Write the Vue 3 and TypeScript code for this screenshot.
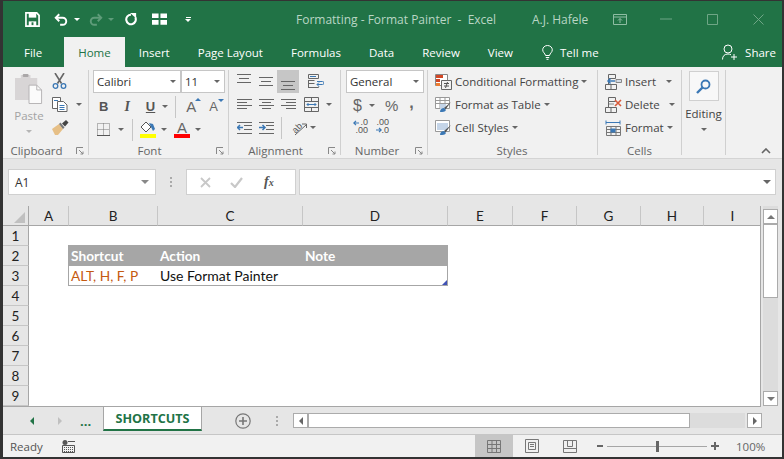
<script setup lang="ts">
const columns = [
  { name: 'A', width: 40 },
  { name: 'B', width: 89 },
  { name: 'C', width: 145 },
  { name: 'D', width: 145 },
  { name: 'E', width: 65 },
  { name: 'F', width: 64 },
  { name: 'G', width: 64 },
  { name: 'H', width: 63 },
  { name: 'I', width: 58 }
]
const rows = [1, 2, 3, 4, 5, 6, 7, 8, 9]

const cells: Record<string, string> = {
  B2: 'Shortcut',
  C2: 'Action',
  D2: 'Note',
  B3: 'ALT, H, F, P',
  C3: 'Use Format Painter'
}

const gridColumns = `26px ${columns.map((c) => c.width + 'px').join(' ')}`

const cellClass = (col: string, row: number) => {
  const inTable = col === 'B' || col === 'C' || col === 'D'
  return {
    'tbl-head': inTable && row === 2,
    'tbl-row': inTable && row === 3,
    'tbl-first': col === 'B' && row === 3,
    'tbl-first-head': col === 'B' && row === 2,
    'tbl-last': col === 'D' && row === 3,
    shortcut: col === 'B' && row === 3
  }
}
</script>

<template>
  <div class="window">
    <header class="titlebar">
      <div class="qat">
        <svg class="q-save" width="15" height="15" viewBox="0 0 16 16"><path d="M1 1h11.500l2.500 2.500V15H1z" fill="none" stroke="#fff" stroke-width="1.800"/><rect x="4" y="1" width="8" height="5" fill="#fff"/><rect x="4" y="10" width="8" height="5" fill="#fff"/><rect x="7" y="11" width="2" height="3" fill="#217346"/></svg>
        <svg class="q-undo" width="14" height="15" viewBox="0 0 16 16"><path d="M6 2L2 6l4 4" fill="none" stroke="#fff" stroke-width="2.200"/><path d="M3 6h7a4 4 0 0 1 0 8H7" fill="none" stroke="#fff" stroke-width="2.200"/></svg>
        <span class="q-caret"></span>
        <svg class="q-redo" width="14" height="15" viewBox="0 0 16 16"><path d="M10 2l4 4-4 4" fill="none" stroke="#5f9c7a" stroke-width="2.200"/><path d="M13 6H6a4 4 0 0 0 0 8h3" fill="none" stroke="#5f9c7a" stroke-width="2.200"/></svg>
        <span class="q-caret dim"></span>
        <svg class="q-repeat" width="13" height="14" viewBox="0 0 15 16"><path d="M8 3a5.500 5.500 0 1 0 5 3" fill="none" stroke="#fff" stroke-width="2.400"/><path d="M7 1h7v6z" fill="#fff"/></svg>
        <svg class="q-form" width="15" height="12" viewBox="0 0 16 12"><path d="M0 0h7v5H0zM9 0h7v5H9zM0 7h7v5H0zM9 7h7v5H9z" fill="#fff"/></svg>
        <span class="q-custom"><i></i><b></b></span>
      </div>
      <div class="doc-title">Formatting - Format Painter &nbsp;-&nbsp; Excel</div>
      <div class="user">A.J. Hafele</div>
      <svg class="w-display" width="14" height="11" viewBox="0 0 14 11"><path d="M.5.500h13v10H.5zM.5 3h13M7 9V4.500M5 6.500l2-2 2 2" fill="none" stroke="#8fbda3"/></svg>
      <svg class="w-min" width="12" height="2" viewBox="0 0 12 2"><path d="M0 1h12" stroke="#6fa686"/></svg>
      <svg class="w-max" width="11" height="11" viewBox="0 0 11 11"><path d="M.5.500h10v10H.5z" fill="none" stroke="#6fa686"/></svg>
      <svg class="w-close" width="11" height="11" viewBox="0 0 11 11"><path d="M.5.500l10 10M10.500.500l-10 10" stroke="#6fa686"/></svg>
    </header>

    <nav class="tabs">
      <span class="tab file">File</span>
      <span class="tab active">Home</span>
      <span class="tab">Insert</span>
      <span class="tab">Page Layout</span>
      <span class="tab">Formulas</span>
      <span class="tab">Data</span>
      <span class="tab">Review</span>
      <span class="tab">View</span>
      <span class="tell">
        <svg width="11" height="15" viewBox="0 0 11 15"><path d="M3.500 10.500C3 8 .7 7.500.7 4.800a4.800 4.300 0 0 1 9.600 0c0 2.700-2.300 3.200-2.800 5.700zM3.800 12.500h3.400M4.500 14.300h2" fill="none" stroke="#fff"/></svg>
        Tell me
      </span>
      <span class="share">
        <svg width="15" height="16" viewBox="0 0 15 16"><circle cx="6" cy="5" r="4" fill="none" stroke="#fff"/><path d="M.5 15.500c0-3.500 2-5.500 5.500-5.500 1.200 0 2 .2 3 .8M9 13h6M12 10v6" fill="none" stroke="#fff"/></svg>
        Share
      </span>
    </nav>

    <section class="ribbon">
      <!-- clipboard -->
      <div class="group g-clip">
        <div class="body clip-body">
          <div class="paste">
            <svg width="29" height="30" viewBox="0 0 30 31"><path d="M0 4h6V1h10v3h7v23H0z" fill="#d8d5d6"/><rect x="8" y="0" width="6" height="3" rx="1" fill="#aaa7a8"/><path d="M14.500 11.500h8l5 5v14h-13z" fill="#fbfbfb" stroke="#b5b3b4"/><path d="M22.500 11.500v5h5" fill="none" stroke="#b5b3b4"/></svg>
            <span class="paste-label">Paste</span>
            <span class="caret light"></span>
          </div>
          <div class="clip-tools">
            <svg width="15" height="16" viewBox="0 0 15 16"><path d="M3 0l6.500 10.500M12 0L5.500 10.500" stroke="#666" stroke-width="1.600"/><circle cx="3.500" cy="13" r="2.300" fill="none" stroke="#3b78b5" stroke-width="1.300"/><circle cx="11.500" cy="13" r="2.300" fill="none" stroke="#3b78b5" stroke-width="1.300"/></svg>
            <span class="ti-row"><svg width="16" height="15" viewBox="0 0 16 15"><path d="M.5.500h8v11H.5z" fill="#fff" stroke="#666"/><path d="M5.500 4.500h6l3.500 3.500v6.500H5.500z" fill="#fff" stroke="#666"/><path d="M7.500 8.500h5M7.500 10.500h5M7.500 12.500h5M2 3.500h4" stroke="#3b78b5"/></svg><span class="caret ml"></span></span>
            <svg width="17" height="15" viewBox="0 0 17 15"><path d="M0 9l7-5 4 5-5 6H3z" fill="#e6bf86"/><path d="M7 4l4 5 1.500-1.500-4-5z" fill="#777"/><path d="M10 3.500l4-3.500 2.500 2.500-3.500 4z" fill="#444"/></svg>
          </div>
        </div>
        <div class="label">Clipboard</div>
        <svg class="launch" width="8" height="8" viewBox="0 0 8 8"><path d="M.5 7V.5H7M3 3l4 4M7 4.500V7H4.500" fill="none" stroke="#888"/></svg>
      </div>

      <!-- font -->
      <div class="group g-font">
        <div class="body">
          <div class="font-boxes">
            <div class="combo name">Calibri<span class="caret"></span></div>
            <div class="combo size">11<span class="caret"></span></div>
          </div>
          <div class="font-row second">
            <b class="fmt b">B</b>
            <i class="fmt i">I</i>
            <u class="fmt u">U</u>
            <span class="caret c-u"></span>
            <span class="vsep s1"></span>
            <span class="grow"><span>A</span><em class="up"></em></span>
            <span class="shrink"><span>A</span><em class="down"></em></span>
          </div>
          <div class="font-row third">
            <svg width="13" height="13" viewBox="0 0 13 13"><path d="M.5.500h12v12H.5zM6.500.500v12M.5 6.500h12" fill="none" stroke="#777" stroke-dasharray="1 1"/><path d="M0 12.500h13" stroke="#555"/></svg>
            <span class="caret c-b"></span>
            <span class="vsep s2"></span>
            <span class="fill">
              <svg width="16" height="12" viewBox="0 0 16 12"><path d="M1 6l5-5 5 5-5 5z" fill="#fff" stroke="#555"/><path d="M9 2l4 1 2 5-2 2-2-4z" fill="#3b78b5"/></svg>
              <i class="bar yellow"></i>
            </span>
            <span class="caret c-f"></span>
            <span class="font-a"><span>A</span><i class="bar red"></i></span>
            <span class="caret c-a"></span>
          </div>
        </div>
        <div class="label">Font</div>
        <svg class="launch" width="8" height="8" viewBox="0 0 8 8"><path d="M.5 7V.5H7M3 3l4 4M7 4.500V7H4.500" fill="none" stroke="#888"/></svg>
      </div>

      <!-- alignment -->
      <div class="group g-align">
        <div class="body">
          <div class="al-row">
            <span class="al"><svg width="14" height="9" class="lift" viewBox="0 0 14 9"><path d="M0 .5h14M2 4.500h10M0 8.500h14" stroke="#666"/></svg></span>
            <span class="al"><svg width="14" height="9" viewBox="0 0 14 9"><path d="M0 .5h14M2 4.500h10M0 8.500h14" stroke="#666"/></svg></span>
            <span class="al on"><svg width="14" height="9" class="drop" viewBox="0 0 14 9"><path d="M0 .5h14M2 4.500h10M0 8.500h14" stroke="#666"/></svg></span>
            <svg class="wrap" width="16" height="15" viewBox="0 0 16 15"><path d="M.5.500h10v4H.5zM.5 6.500h6M.5 9.500h6M.5 13.500h10v-1M.5 6v8" fill="none" stroke="#666"/><path d="M2 2.500h6M9 7.500h5.500a1 1 0 0 1 0 3H9M11 8.500l-2 2 2 2" fill="none" stroke="#3b78b5"/></svg>
          </div>
          <div class="al-row">
            <span class="al"><svg width="15" height="11" viewBox="0 0 15 11"><path d="M0 .5h15M0 3.500h10M0 6.500h15M0 9.500h10" stroke="#666"/></svg></span>
            <span class="al"><svg width="15" height="11" viewBox="0 0 15 11"><path d="M0 .5h15M3 3.500h9M0 6.500h15M3 9.500h9" stroke="#666"/></svg></span>
            <span class="al"><svg width="15" height="11" viewBox="0 0 15 11"><path d="M0 .5h15M5 3.500h10M0 6.500h15M5 9.500h10" stroke="#666"/></svg></span>
            <svg class="merge" width="15" height="15" viewBox="0 0 15 15"><path d="M.5.500h14v14H.5zM.5 4.500h14M.5 10.500h14M7.500.500v4M7.500 10.500v4" fill="none" stroke="#666"/><path d="M3 7.500h9M4.500 6l-1.500 1.500L4.500 9M10.500 6L12 7.500 10.500 9" fill="none" stroke="#3b78b5"/></svg>
            <span class="caret c-m"></span>
          </div>
          <div class="al-row">
            <span class="al"><svg width="15" height="12" viewBox="0 0 15 12"><path d="M0 .5h15M7 3.500h8M7 7.500h8M0 11.500h15" stroke="#666"/><path d="M0 5.500h6M3 3L.5 5.500 3 8" fill="none" stroke="#3b78b5" stroke-width="1.500"/></svg></span>
            <span class="al"><svg width="15" height="12" viewBox="0 0 15 12"><path d="M0 .5h15M7 3.500h8M7 7.500h8M0 11.500h15" stroke="#666"/><path d="M0 5.500h6M3.500 3L6 5.500 3.500 8" fill="none" stroke="#3b78b5" stroke-width="1.500"/></svg></span>
            <span class="vsep s3"></span>
            <svg class="orient" width="16" height="16" viewBox="0 0 16 16"><text x="1" y="11" transform="rotate(-45 6 8)" class="ab">ab</text><path d="M4 15L15 5M11 4h4.500v4" fill="none" stroke="#666"/></svg>
            <span class="caret c-o"></span>
          </div>
        </div>
        <div class="label">Alignment</div>
        <svg class="launch" width="8" height="8" viewBox="0 0 8 8"><path d="M.5 7V.5H7M3 3l4 4M7 4.500V7H4.500" fill="none" stroke="#888"/></svg>
      </div>

      <!-- number -->
      <div class="group g-num">
        <div class="body">
          <div class="combo general">General<span class="caret"></span></div>
          <div class="num-row">
            <span class="dollar">$</span>
            <span class="caret c-d"></span>
            <span class="pct">%</span>
            <span class="comma">,</span>
          </div>
          <div class="dec-row">
            <span class="dec"><svg class="dec-arrow left" width="6" height="6" viewBox="0 0 6 6"><path d="M6 3H1M3 .8L.8 3 3 5.200" fill="none" stroke="#3b78b5" stroke-width="1.200"/></svg>{{ '.0\n.00' }}</span>
            <span class="dec two"><svg class="dec-arrow right" width="6" height="6" viewBox="0 0 6 6"><path d="M0 3h5M3 .8L5.200 3 3 5.200" fill="none" stroke="#3b78b5" stroke-width="1.200"/></svg>{{ '.00\n.0' }}</span>
          </div>
        </div>
        <div class="label">Number</div>
        <svg class="launch" width="8" height="8" viewBox="0 0 8 8"><path d="M.5 7V.5H7M3 3l4 4M7 4.500V7H4.500" fill="none" stroke="#888"/></svg>
      </div>

      <!-- styles -->
      <div class="group g-styles">
        <div class="body">
          <div class="list-row">
            <svg width="17" height="16" viewBox="0 0 17 16"><path d="M.5.500h12v11H.5z" fill="#fff" stroke="#888"/><path d="M1 1h7v3H1z" fill="#d24726"/><path d="M1 5h4v3H1z" fill="#d24726"/><path d="M1 9h4v3H1z" fill="#ed7d31"/><path d="M6.500 6.500h10v9h-10z" fill="#f1f1f1" stroke="#666"/><path d="M9 9.500h5M9 12h5M12.500 8l-2 6" stroke="#555"/></svg>
            <span>Conditional Formatting</span><span class="caret tight"></span>
          </div>
          <div class="list-row">
            <svg width="17" height="16" viewBox="0 0 17 16"><path d="M.5.500h14v11H.5zM.5 3.500h14M.5 6.500h14M5 .5v11M10 .5v11" fill="#fff" stroke="#999"/><path d="M5 7h6v5H5z" fill="#c5d5e8"/><path d="M16 5L9 11l1.500 1.500z" fill="#555"/><path d="M5 15c0-3 2-4 4-4l2 2c-1 2-3 2-6 2z" fill="#3b78b5"/></svg>
            <span>Format as Table</span><span class="caret tight"></span>
          </div>
          <div class="list-row">
            <svg width="17" height="16" viewBox="0 0 17 16"><path d="M.5.500h14v11H.5z" fill="#fff" stroke="#999"/><path d="M2 3h11v7H2z" fill="#c5d5e8"/><path d="M16 5L9 11l1.500 1.500z" fill="#555"/><path d="M5 15c0-3 2-4 4-4l2 2c-1 2-3 2-6 2z" fill="#3b78b5"/></svg>
            <span>Cell Styles</span><span class="caret tight"></span>
          </div>
        </div>
        <div class="label">Styles</div>
      </div>

      <!-- cells -->
      <div class="group g-cells">
        <div class="body">
          <div class="list-row">
            <svg width="17" height="16" viewBox="0 0 17 16"><path d="M3.500.500h7v4h-7zM.5 10.500h11v5H.5zM6 10.500v5M3.500 4.500v6" fill="none" stroke="#666"/><path d="M11 5.500h5.500v3H11z" fill="#d5dde6" stroke="#888"/><path d="M10 7H3M5.500 4.500L3 7l2.500 2.500" fill="none" stroke="#3b78b5" stroke-width="1.500"/></svg>
            <span>Insert</span><span class="caret wide1"></span>
          </div>
          <div class="list-row">
            <svg width="17" height="16" viewBox="0 0 17 16"><path d="M3.500.500h7v4h-7zM.5 10.500h11v5H.5zM6 10.500v5M3.500 4.500v6" fill="none" stroke="#666"/><path d="M10 3l6 6M16 3l-6 6" stroke="#d85a3a" stroke-width="1.600"/><path d="M4 7h5" stroke="#888"/></svg>
            <span>Delete</span><span class="caret wide2"></span>
          </div>
          <div class="list-row">
            <svg width="17" height="16" viewBox="0 0 17 16"><path d="M1.500 6.500h14v9h-14zM1.500 9.500h14M1.500 12.500h14M6 6.500v9M11 6.500v9" fill="none" stroke="#777"/><path d="M5.500 8.500h5v4h-5z" fill="#3b78b5"/><path d="M1 2.500h14M1 .5v4M15 .5v4" fill="none" stroke="#3b78b5"/></svg>
            <span>Format</span><span class="caret tight"></span>
          </div>
        </div>
        <div class="label">Cells</div>
      </div>

      <!-- editing -->
      <div class="group g-edit">
        <div class="body edit-body">
          <span class="find">
            <svg width="15" height="15" viewBox="0 0 15 15"><circle cx="9.500" cy="5.500" r="4" fill="none" stroke="#3b78b5" stroke-width="1.800"/><path d="M6.500 8.500L1 14" stroke="#3b78b5" stroke-width="2.400"/></svg>
          </span>
          <span class="edit-label">Editing</span>
          <span class="caret"></span>
        </div>
      </div>
      <div class="collapse">
        <svg width="10" height="6" viewBox="0 0 10 6"><path d="M1 5l4-4 4 4" fill="none" stroke="#666" stroke-width="1.600"/></svg>
      </div>
    </section>

    <section class="formula">
      <div class="namebox">A1<span class="caret"></span></div>
      <span class="f-dots"><i></i><i></i><i></i></span>
      <div class="f-tools">
        <svg width="11" height="11" viewBox="0 0 11 11"><path d="M1 1l9 9M10 1l-9 9" stroke="#c8c8c8" stroke-width="1.800"/></svg>
        <svg width="13" height="11" viewBox="0 0 13 11"><path d="M1 6l4 4 7-9" fill="none" stroke="#c8c8c8" stroke-width="2.200"/></svg>
        <span class="fx">f<small>x</small></span>
      </div>
      <div class="f-input"><span class="caret big"></span></div>
    </section>

    <section class="sheet-area">
      <div class="sheet" :style="{ gridTemplateColumns: gridColumns }">
        <div class="corner"><i></i></div>
        <div v-for="c in columns" :key="c.name" class="col-head">{{ c.name }}</div>
        <template v-for="r in rows" :key="r">
          <div class="row-head">{{ r }}</div>
          <div
            v-for="c in columns"
            :key="c.name + r"
            class="cell"
            :class="cellClass(c.name, r)"
          >
            {{ cells[c.name + r] }}
            <i v-if="c.name === 'D' && r === 3" class="handle"></i>
          </div>
        </template>
      </div>
      <div class="vscroll">
        <span class="sb-btn"><em class="tri up-tri"></em></span>
        <span class="v-thumb"></span>
        <span class="v-track"></span>
        <span class="sb-btn"><em class="tri dn-tri"></em></span>
      </div>
    </section>

    <section class="sheetbar">
      <em class="arrow-l green"></em>
      <em class="arrow-r"></em>
      <span class="more">...</span>
      <span class="sheet-tab">SHORTCUTS</span>
      <svg class="add" width="16" height="16" viewBox="0 0 16 16"><circle cx="8" cy="8" r="7.200" fill="none" stroke="#777" stroke-width="1.200"/><path d="M8 4v8M4 8h8" stroke="#777" stroke-width="1.600"/></svg>
      <span class="bar-dots"><i></i><i></i><i></i></span>
      <div class="hscroll">
        <span class="h-btn"><em class="arrow-l"></em></span>
        <span class="h-thumb"></span>
        <span class="h-track"></span>
        <span class="h-btn end"><em class="arrow-r dark"></em></span>
      </div>
    </section>

    <footer class="status">
      <span class="ready">Ready</span>
      <svg class="macro" width="13" height="13" viewBox="0 0 13 13"><circle cx="3" cy="2.500" r="2.500" fill="#555"/><path d="M6 1.500h7M.5 5.500h12v7H.5z" fill="none" stroke="#555"/><path d="M2 7.500h9M2 9.500h9M2 11.500h9" stroke="#555" stroke-dasharray="1 1"/></svg>
      <div class="views">
        <span class="view on"><svg width="14" height="13" viewBox="0 0 14 13"><path d="M.5.500h13v12H.5zM.5 4.500h13M.5 8.500h13M5 .5v12M9.500.5v12" fill="none" stroke="#777"/></svg></span>
        <span class="view"><svg width="14" height="14" viewBox="0 0 14 14"><path d="M.5.500h13v13H.5z" fill="none" stroke="#777"/><path d="M3.500 3.500h7v7h-7zM5 5.500h4M5 7.500h4" fill="none" stroke="#777"/></svg></span>
        <span class="view"><svg width="14" height="13" viewBox="0 0 14 13"><path d="M.5.500h13v12H.5zM4.500.5v6h5v-6M.5 8.500h13" fill="none" stroke="#777"/></svg></span>
      </div>
      <div class="zoom">
        <span class="z-minus"></span>
        <span class="z-track"><i></i></span>
        <span class="z-plus"></span>
        <span class="z-val">100%</span>
      </div>
    </footer>
  </div>
</template>

<style>
html, body { margin: 0; background: #fff; }
</style>

<style scoped>
.window {
  width: 784px;
  height: 459px;
  box-sizing: border-box;
  border: solid #333;
  border-width: 1px 2px 2px 3px;
  display: flex;
  flex-direction: column;
  overflow: hidden;
  background: #e6e6e6;
  font-family: "Open Sans", "Liberation Sans", sans-serif;
  font-size: 11.5px;
  color: #444;
}

/* title bar */
.titlebar { height: 36px; flex: none; background: #217346; display: flex; align-items: center; position: relative; }
.qat { display: flex; align-items: center; width: 293px; padding-left: 22px; box-sizing: border-box; flex: none; }
.q-undo { margin-left: 14px; }
.q-caret { width: 0; height: 0; border: 3px solid transparent; border-top: 3px solid #fff; border-bottom: 0; margin-left: 6px; }
.q-caret.dim { border-top-color: #5f9c7a; margin-left: 5px; }
.q-redo { margin-left: 9px; }
.q-repeat { margin-left: 10px; }
.q-form { margin-left: 15px; }
.q-custom { margin-left: 18px; display: flex; flex-direction: column; align-items: center; gap: 1px; }
.q-custom i { width: 5px; height: 1px; background: #fff; }
.q-custom b { width: 0; height: 0; border: 3px solid transparent; border-top: 3px solid #fff; border-bottom: 0; }
.doc-title { width: 236px; color: #b9d6c5; font-size: 12px; white-space: nowrap; }
.user { width: 81px; color: #b9d6c5; font-size: 12px; white-space: nowrap; }
.w-min { margin-left: 33px; }
.w-max { margin-left: 35px; }
.w-close { margin-left: 35px; }

.tabs { height: 30px; flex: none; background: #217346; display: flex; align-items: stretch; color: #fff; font-size: 11.5px; }
.tab { padding: 0 14px; display: flex; align-items: center; white-space: nowrap; }
.tab.file { margin-left: 7px; margin-right: 8px; }
.tab.active { background: #f1f1f1; color: #217346; }
.tell { display: flex; align-items: center; gap: 7px; margin-left: 15px; }
.share { display: flex; align-items: center; gap: 8px; margin-left: auto; margin-right: 6px; }

/* ribbon */
.ribbon { height: 92px; flex: none; box-sizing: border-box; background: #f1f1f1; border-bottom: 1px solid #d4d4d4; display: flex; padding-top: 3px; position: relative; }
.group { height: 85px; box-sizing: border-box; border-right: 1px solid #d0d0d0; position: relative; flex: none; }
.body { height: 75px; box-sizing: border-box; }
.label { line-height: 12px; text-align: center; color: #666; font-size: 11.5px; }
.launch { position: absolute; right: 4px; bottom: 0; }
.caret { display: inline-block; width: 0; height: 0; border: 3px solid transparent; border-top: 3px solid #666; border-bottom: 0; flex: none; }
.caret.light { border-top-color: #b5b5b5; }
.caret.ml { margin-left: 8px; }
.caret.tight { margin-left: 3px; }

.g-clip { width: 86px; }
.g-clip .label { padding-right: 18px; }
.clip-body { display: flex; }
.paste { margin-left: 9px; width: 34px; display: flex; flex-direction: column; align-items: center; padding-top: 4px; box-sizing: border-box; }
.paste-label { color: #a3a3a3; line-height: 16px; margin-top: 4px; }
.paste .caret { margin-top: 6px; }
.clip-tools { margin-left: 6px; display: flex; flex-direction: column; padding-top: 3px; gap: 8px; align-items: flex-start; }
.ti-row { display: flex; align-items: center; }

.g-font { width: 140px; }
.g-font .label { padding-right: 18px; }
.font-boxes { display: flex; margin-left: 4px; }
.combo { height: 23px; box-sizing: border-box; border: 1px solid #c6c6c6; background: #fff; display: flex; align-items: center; justify-content: space-between; padding: 0 4px 0 3px; color: #333; font-size: 11.5px; }
.combo.name { width: 88px; }
.combo.size { width: 44px; border-left: 1px solid #c6c6c6; margin-left: 0; }
.font-row { display: flex; align-items: center; height: 23px; position: relative; }
.second { margin-top: 2px; }
.fmt { font-family: "Liberation Sans", sans-serif; font-size: 13px; color: #555; line-height: 1; }
.fmt.b { margin-left: 10px; font-weight: 700; }
.fmt.i { margin-left: 16px; font-family: "Liberation Serif", serif; font-size: 14px; font-weight: 700; }
.fmt.u { margin-left: 16px; font-weight: 700; }
.c-u { margin-left: 7px; }
.vsep { width: 1px; background: #c6c6c6; flex: none; height: 22px; }
.s1 { margin-left: 7px; }
.grow, .shrink { position: relative; display: inline-block; font-family: "Liberation Sans", sans-serif; color: #666; line-height: 1; }
.grow { font-size: 15px; margin-left: 10px; }
.shrink { font-size: 13px; margin-left: 13px; }
.grow em, .shrink em { position: absolute; width: 0; height: 0; border: 3px solid transparent; }
.grow em { border-bottom: 3px solid #3b78b5; border-top: 0; right: -5px; top: -1px; }
.shrink em { border-top: 3px solid #3b78b5; border-bottom: 0; right: -6px; top: -1px; }
.third > svg:first-child { margin-left: 8px; }
.c-b { margin-left: 8px; }
.s2 { margin-left: 8px; }
.fill { margin-left: 7px; display: flex; flex-direction: column; width: 16px; gap: 1px; }
.bar { display: block; height: 4px; }
.bar.yellow { background: #ffff00; }
.bar.red { background: #ff0000; }
.c-f { margin-left: 5px; }
.font-a { margin-left: 7px; width: 16px; display: flex; flex-direction: column; text-align: center; font-family: "Liberation Sans", sans-serif; font-size: 15px; line-height: 13px; color: #666; }
.c-a { margin-left: 5px; }

.g-align { width: 112px; }
.g-align .label { padding-right: 18px; }
.al-row { height: 23px; display: flex; align-items: center; margin-left: 4px; }
.al { width: 22px; height: 23px; display: flex; align-items: center; justify-content: center; flex: none; }
.al.on { background: #c6c6c6; }
.lift { margin-top: -6px; }
.drop { margin-top: 8px; }
.wrap { margin-left: 9px; }
.merge { margin-left: 5px; }
.c-m { margin-left: 7px; }
.s3 { margin-left: 4px; }
.orient { margin-left: 9px; }
.c-o { margin-left: 3px; }
.ab { font-family: "Liberation Sans", sans-serif; font-size: 9px; fill: #555; }

.g-num { width: 87px; padding-left: 5px; }
.g-num .label { padding-right: 19px; }
.combo.general { width: 78px; }
.num-row { height: 23px; margin-top: 1px; display: flex; align-items: center; color: #666; font-family: "Liberation Sans", sans-serif; }
.dollar { font-size: 16px; margin-left: 7px; }
.c-d { margin-left: 7px; }
.pct { font-size: 15px; margin-left: 10px; }
.comma { font-size: 16px; font-weight: 700; margin-left: 11px; margin-top: -5px; }
.dec-row { display: flex; margin-left: 7px; margin-top: 2px; }
.dec { width: 15px; height: 15px; position: relative; white-space: pre-line; text-align: right; font-size: 9px; line-height: 7.5px; color: #555; font-family: "Liberation Sans", sans-serif; }
.dec.two { margin-left: 6px; }
.dec-arrow { position: absolute; }
.dec-arrow.left { left: 0; top: 1px; }
.dec-arrow.right { left: 2px; top: 8px; }

.g-styles { width: 170px; padding-left: 7px; }
.g-styles .label { padding-right: 8px; }
.g-cells { width: 84px; padding-left: 7px; }
.g-cells .label { padding-right: 7px; }
.list-row { height: 23px; display: flex; align-items: center; white-space: nowrap; color: #444; }
.list-row > svg { margin-right: 3px; flex: none; }
.wide1 { margin-left: 10px; }
.wide2 { margin-left: 9px; }

.g-edit { width: 44px; }
.edit-body { display: flex; flex-direction: column; align-items: center; }
.find { width: 30px; height: 30px; box-sizing: border-box; border: 1px solid #d0d0d0; background: #f8f8f8; display: flex; align-items: center; justify-content: center; margin-top: 1px; }
.edit-label { line-height: 16px; margin-top: 5px; }
.edit-body .caret { margin-top: 6px; }
.collapse { margin-left: 35px; margin-top: 78px; line-height: 0; height: 6px; }

/* formula bar */
.formula { height: 47px; flex: none; display: flex; align-items: flex-start; padding: 10px 5px 0 5px; box-sizing: border-box; background: #e6e6e6; }
.namebox, .f-tools, .f-input { height: 26px; box-sizing: border-box; background: #fff; border: 1px solid #d0d0d0; display: flex; align-items: center; }
.namebox { width: 148px; justify-content: space-between; padding: 0 6px; color: #333; font-size: 12px; }
.namebox .caret { border-width: 4px 4px 0; border-top-color: #888; }
.f-dots { width: 30px; height: 26px; display: flex; flex-direction: column; align-items: center; justify-content: center; gap: 2px; }
.f-dots i, .bar-dots i { width: 2px; height: 2px; background: #aaa; display: block; }
.f-tools { width: 110px; padding-left: 13px; gap: 19px; }
.fx { font-family: "Liberation Serif", serif; font-style: italic; font-weight: 700; font-size: 14px; color: #555; margin-left: 2px; }
.fx small { font-size: 10px; }
.f-input { width: 477px; margin-left: 3px; justify-content: flex-end; padding-right: 4px; }
.caret.big { border-width: 4px 4px 0; border-top-color: #666; }

/* sheet */
.sheet-area { height: 201px; flex: none; display: flex; background: #e6e6e6; }
.sheet { width: 758px; height: 201px; box-sizing: border-box; display: grid; grid-template-rows: 20px repeat(9, 20px); overflow: hidden; border-bottom: 1px solid #a6a6a6; border-right: 1px solid #a6a6a6; background: #fff; font-family: "Lato", "Liberation Sans", sans-serif; }
.corner { background: #e6e6e6; border-right: 1px solid #a6a6a6; border-bottom: 1px solid #a6a6a6; position: relative; }
.corner i { position: absolute; right: 3px; bottom: 2px; width: 0; height: 0; border-style: solid; border-width: 0 0 11px 11px; border-color: transparent transparent #c0c0c0 transparent; }
.col-head { background: #e6e6e6; border-right: 1px solid #c6c6c6; border-bottom: 1px solid #a6a6a6; text-align: center; line-height: 21px; color: #222; font-size: 13.5px; }
.row-head { background: #e6e6e6; border-right: 1px solid #a6a6a6; border-bottom: 1px solid #c6c6c6; text-align: center; line-height: 21px; color: #222; font-size: 13.5px; }
.cell { font-size: 14px; line-height: 20px; color: #111; padding-left: 2px; white-space: nowrap; position: relative; box-sizing: border-box; }
.tbl-head { background: #a6a6a6; color: #fff; font-weight: 700; font-size: 13.7px; margin-top: -1px; line-height: 21px; }
.tbl-row { border-bottom: 1px solid #a6a6a6; }
.tbl-first-head { margin-left: -1px; padding-left: 3px; }
.tbl-first { border-left: 1px solid #a6a6a6; margin-left: -1px; padding-left: 2px; font-size: 13.7px; }
.tbl-last { border-right: 1px solid #a6a6a6; }
.shortcut { color: #c55a11; }
.handle { position: absolute; right: 0; bottom: 0; width: 0; height: 0; border-style: solid; border-width: 0 0 5px 5px; border-color: transparent transparent #3f51b5 transparent; }

.vscroll { width: 15px; margin-left: 2px; background: #dcdcdc; display: flex; flex-direction: column; height: 200px; box-sizing: border-box; }
.sb-btn { height: 15px; flex: none; background: #fff; border: 1px solid #ababab; box-sizing: border-box; display: flex; align-items: center; justify-content: center; }
.sb-btn:first-child { margin-top: 3px; }
.tri { width: 0; height: 0; border-style: solid; }
.up-tri { border-width: 0 4px 4px; border-color: transparent transparent #777; }
.dn-tri { border-width: 4px 4px 0; border-color: #777 transparent transparent; }
.v-thumb { height: 74px; flex: none; background: #fff; border: 1px solid #ababab; box-sizing: border-box; }
.v-track { flex: 1; }

/* sheet tabs */
.sheetbar { height: 28px; flex: none; display: flex; align-items: center; background: #e6e6e6; position: relative; border-bottom: 1px solid #c6c6c6; box-sizing: border-box; }
.arrow-l, .arrow-r { display: block; width: 0; height: 0; border-style: solid; flex: none; }
.arrow-l { border-width: 4px 4px 4px 0; border-color: transparent #666 transparent transparent; }
.arrow-r { border-width: 4px 0 4px 4px; border-color: transparent transparent transparent #c0c0c0; }
.arrow-r.dark { border-left-color: #666; }
.sheetbar > .arrow-l { margin-left: 27px; border-right-color: #217346; }
.sheetbar > .arrow-r { margin-left: 24px; }
.more { color: #217346; font-weight: 700; margin-left: 18px; font-size: 13px; width: 14px; }
.sheet-tab { margin-left: 9px; width: 99px; height: 24px; align-self: flex-start; box-sizing: border-box; background: #fff; border: solid #a6a6a6; border-width: 0 1px; border-bottom: 2px solid #217346; color: #217346; font-weight: 700; font-size: 12.6px; text-align: center; line-height: 23px; }
.add { margin-left: 33px; }
.bar-dots { margin-left: 25px; display: flex; flex-direction: column; gap: 2px; }
.hscroll { margin-left: 15px; width: 469px; height: 15px; display: flex; }
.h-btn { width: 15px; height: 15px; flex: none; box-sizing: border-box; background: #fff; border: 1px solid #ababab; display: flex; align-items: center; justify-content: center; }
.h-btn.end { margin-left: 2px; }
.h-thumb { width: 382px; flex: none; background: #fff; border: 1px solid #ababab; box-sizing: border-box; }
.h-track { flex: 1; background: #dcdcdc; }

/* status */
.status { flex: 1; background: #f1f1f1; display: flex; align-items: stretch; position: relative; color: #555; }
.ready { margin-left: 7px; align-self: center; width: 52px; }
.macro { align-self: center; }
.views { display: flex; margin-left: 400px; }
.view { width: 38px; display: flex; align-items: center; justify-content: center; }
.view.on { background: #c6c6c6; }
.zoom { display: flex; align-items: center; margin-left: 2px; }
.z-minus { width: 6px; height: 2px; background: #666; margin-left: 6px; }
.z-track { width: 100px; height: 1px; background: #a6a6a6; margin-left: 4px; position: relative; }
.z-track i { position: absolute; left: 49px; top: -5px; width: 3px; height: 11px; background: #666; }
.z-plus { width: 8px; height: 8px; margin-left: 4px; background: linear-gradient(#666, #666) center / 8px 2px no-repeat, linear-gradient(#666, #666) center / 2px 8px no-repeat; }
.z-val { margin-left: 17px; font-size: 11.5px; color: #666; }
</style>
